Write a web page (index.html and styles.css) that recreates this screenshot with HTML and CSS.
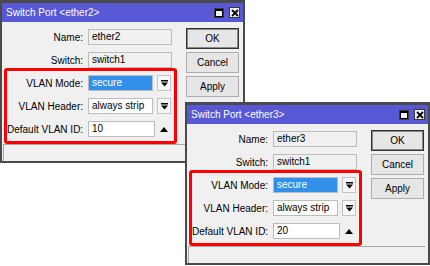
FILE: index.html
```html
<!DOCTYPE html>
<html lang="en">
<head>
    <meta charset="UTF-8" />
    <meta name="viewport" content="width=device-width, initial-scale=1.0" />
    <title>Switch Port</title>
    <link rel="stylesheet" href="styles.css">
</head>
<body>
    <div class="desktop">

        <div class="window w1">
            <div class="titlebar">
                <span class="title">Switch Port &lt;ether2&gt;</span>
                <span class="tb"><svg width="8" height="8" viewBox="0 0 8 8"><rect x="0.5" y="0.5" width="7" height="7" fill="none" stroke="#000"/><rect x="0" y="0" width="8" height="2" fill="#000"/></svg></span>
                <span class="tb tb-x"><svg width="8" height="8" viewBox="0 0 8 8"><path d="M1 1 L7 7 M7 1 L1 7" stroke="#000" stroke-width="1.8"/></svg></span>
            </div>
            <div class="content">
                <div class="form">
                    <div class="row"><span class="label">Name:</span><span class="field ro w-full">ether2</span></div>
                    <div class="row"><span class="label">Switch:</span><span class="field ro w-full">switch1</span></div>
                    <div class="hl">
                        <div class="row"><span class="label">VLAN Mode:</span><span class="field sel w-sel">secure</span><span class="drop"><svg width="7" height="7" viewBox="0 0 7 7"><rect x="0" y="0" width="7" height="1.5" fill="#000"/><path d="M0 2.5 H7 L3.5 6.5 Z" fill="#000"/></svg></span></div>
                        <div class="row"><span class="label">VLAN Header:</span><span class="field w-sel">always strip</span><span class="drop"><svg width="7" height="7" viewBox="0 0 7 7"><rect x="0" y="0" width="7" height="1.5" fill="#000"/><path d="M0 2.5 H7 L3.5 6.5 Z" fill="#000"/></svg></span></div>
                        <div class="row"><span class="label">Default VLAN ID:</span><span class="field w-num">10</span><span class="up"><svg width="8" height="5" viewBox="0 0 8 5"><path d="M0 5 H8 L4 0 Z" fill="#000"/></svg></span></div>
                    </div>
                </div>
                <div class="buttons">
                    <div class="btn default">OK</div>
                    <div class="btn">Cancel</div>
                    <div class="btn">Apply</div>
                </div>
            </div>
            <div class="status"></div>
        </div>

        <div class="window w2">
            <div class="titlebar">
                <span class="title">Switch Port &lt;ether3&gt;</span>
                <span class="tb"><svg width="8" height="8" viewBox="0 0 8 8"><rect x="0.5" y="0.5" width="7" height="7" fill="none" stroke="#000"/><rect x="0" y="0" width="8" height="2" fill="#000"/></svg></span>
                <span class="tb tb-x"><svg width="8" height="8" viewBox="0 0 8 8"><path d="M1 1 L7 7 M7 1 L1 7" stroke="#000" stroke-width="1.8"/></svg></span>
            </div>
            <div class="content">
                <div class="form">
                    <div class="row"><span class="label">Name:</span><span class="field ro w-full">ether3</span></div>
                    <div class="row"><span class="label">Switch:</span><span class="field ro w-full">switch1</span></div>
                    <div class="hl">
                        <div class="row"><span class="label">VLAN Mode:</span><span class="field sel w-sel">secure</span><span class="drop"><svg width="7" height="7" viewBox="0 0 7 7"><rect x="0" y="0" width="7" height="1.5" fill="#000"/><path d="M0 2.5 H7 L3.5 6.5 Z" fill="#000"/></svg></span></div>
                        <div class="row"><span class="label">VLAN Header:</span><span class="field w-sel">always strip</span><span class="drop"><svg width="7" height="7" viewBox="0 0 7 7"><rect x="0" y="0" width="7" height="1.5" fill="#000"/><path d="M0 2.5 H7 L3.5 6.5 Z" fill="#000"/></svg></span></div>
                        <div class="row"><span class="label">Default VLAN ID:</span><span class="field w-num">20</span><span class="up"><svg width="8" height="5" viewBox="0 0 8 5"><path d="M0 5 H8 L4 0 Z" fill="#000"/></svg></span></div>
                    </div>
                </div>
                <div class="buttons">
                    <div class="btn default">OK</div>
                    <div class="btn">Cancel</div>
                    <div class="btn">Apply</div>
                </div>
            </div>
            <div class="status"></div>
        </div>

    </div>
</body>
</html>
```

FILE: styles.css
```css
body {
    margin: 0;
    background: #fff;
    font-family: "Liberation Sans", Arial, sans-serif;
    font-size: 10px;
    color: #000;
}
.desktop {
    position: relative;
    width: 430px;
    height: 266px;
    overflow: hidden;
}
.window {
    position: absolute;
    width: 245px;
    height: 163px;
    box-sizing: border-box;
    border: 2px solid #4a4a4a;
    border-top-width: 3px;
    background: #f0f0f0;
    display: flex;
    flex-direction: column;
}
.w1 { left: 0; top: 0; }
.w2 { left: 185px; top: 102px; }
.titlebar {
    height: 19px;
    flex: none;
    background: #5858d4;
    color: #fff;
    display: flex;
    align-items: center;
    gap: 5px;
    padding: 0 3px 0 4px;
}
.title { flex: 1; }
.tb {
    box-sizing: border-box;
    width: 10px;
    height: 10px;
    border: 1px solid #3a3a3a;
    background: #f2f2f2;
    display: flex;
    align-items: center;
    justify-content: center;
}
.tb-x {
    width: 11px;
    height: 11px;
}
.content {
    display: flex;
}
.form {
    width: 184px;
    padding-top: 7px;
}
.row {
    display: flex;
    align-items: center;
    height: 16px;
}
.row + .row { margin-top: 7px; }
.form > .row:nth-child(2) { margin-top: 7px; }
.label {
    width: 81px;
    margin-right: 5px;
    text-align: right;
    white-space: nowrap;
}
.hl {
    margin-left: 2px;
    width: 167px;
    border: 3px solid #f00;
    border-radius: 3px;
    padding: 4px 0;
}
.hl .label { width: 76px; }
.field {
    box-sizing: border-box;
    height: 16px;
    line-height: 14px;
    border: 1px solid #bcbcbc;
    background: #fff;
    padding: 0 3px;
    white-space: nowrap;
    overflow: hidden;
}
.field.ro { background: #f0f0f0; }
.field.sel {
    background: #3390ea;
    color: #fff;
}
.w-full { width: 84px; }
.w-sel { width: 65px; }
.w-num { width: 67px; }
.drop {
    box-sizing: border-box;
    width: 14px;
    height: 16px;
    margin-left: 4px;
    border: 1px solid #c4c4c4;
    background: #f7f7f7;
    display: flex;
    align-items: center;
    justify-content: center;
}
.up {
    width: 9px;
    margin-left: 4px;
    display: flex;
    justify-content: center;
}
.buttons {
    padding-top: 6px;
    display: flex;
    flex-direction: column;
    gap: 3px;
}
.btn {
    box-sizing: border-box;
    width: 53px;
    height: 21px;
    border: 1px solid #adadad;
    background: #e6e6e6;
    display: flex;
    align-items: center;
    justify-content: center;
}
.btn.default {
    border-color: #333;
    box-shadow: inset 0 0 0 1px #888;
}
.status {
    margin: auto 3px 0 1px;
    height: 17px;
    box-sizing: border-box;
    border-top: 1px solid #a8a8a8;
    border-left: 1px solid #a8a8a8;
}
```
